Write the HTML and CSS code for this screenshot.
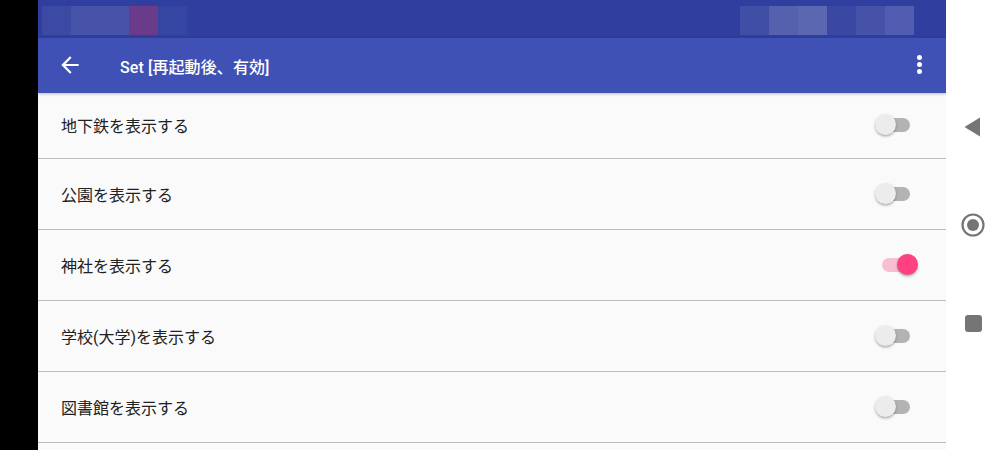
FILE: index.html
```html
<!DOCTYPE html>
<html lang="ja">
<head>
<meta charset="utf-8">
<link rel="stylesheet" href="styles.css">
</head>
<body>
<div class="device">
  <div class="bezel"></div>
  <div class="screen">
    <div class="statusbar">
      <div class="blocks">
        <span class="b b1"></span><span class="b b2"></span><span class="b b2"></span><span class="b b3"></span><span class="b b4"></span>
      </div>
      <div class="blocks">
        <span class="b r1"></span><span class="b r2"></span><span class="b r3"></span><span class="b r4"></span><span class="b r5"></span><span class="b r6"></span>
      </div>
    </div>
    <div class="appbar">
      <svg class="back" width="26" height="26" viewBox="0 0 24 24"><path d="M20 11H7.83l5.59-5.59L12 4l-8 8 8 8 1.41-1.41L7.83 13H20v-2z" fill="#fff"/></svg>
      <div class="title">Set [再起動後、有効]</div>
      <div class="dots"><i></i><i></i><i></i></div>
    </div>
    <div class="list">
      <div class="row first"><span class="label">地下鉄を表示する</span><span class="switch"><span class="track"></span><span class="thumb"></span></span></div>
      <div class="row"><span class="label">公園を表示する</span><span class="switch"><span class="track"></span><span class="thumb"></span></span></div>
      <div class="row"><span class="label">神社を表示する</span><span class="switch on"><span class="track"></span><span class="thumb"></span></span></div>
      <div class="row"><span class="label">学校(大学)を表示する</span><span class="switch"><span class="track"></span><span class="thumb"></span></span></div>
      <div class="row"><span class="label">図書館を表示する</span><span class="switch"><span class="track"></span><span class="thumb"></span></span></div>
    </div>
  </div>
  <div class="nav">
    <svg class="nav-back" width="16" height="20" viewBox="0 0 16 20"><path d="M16 0.5V19.5L0.5 10Z" fill="#757575"/></svg>
    <svg class="nav-home" width="26" height="26" viewBox="0 0 26 26"><circle cx="13" cy="13" r="10.5" fill="none" stroke="#757575" stroke-width="2.2"/><circle cx="13" cy="13" r="6" fill="#757575"/></svg>
    <span class="nav-recent"></span>
  </div>
</div>
</body>
</html>
```

FILE: styles.css
```css
* { box-sizing: border-box; }
html, body { margin: 0; padding: 0; }
body {
  width: 1000px;
  height: 450px;
  overflow: hidden;
  font-family: Roboto, "Noto Sans CJK JP", "Noto Sans", sans-serif;
  background: #000;
}
.device {
  display: flex;
  height: 450px;
}
.bezel {
  width: 38px;
  flex: none;
  background: #000;
}
.screen {
  width: 908px;
  flex: none;
  display: flex;
  flex-direction: column;
  background: #fafafa;
  overflow: hidden;
}
.statusbar {
  height: 38px;
  flex: none;
  background: #303f9f;
  display: flex;
  justify-content: space-between;
  padding: 6px 32px 3px 4px;
}
.blocks { display: flex; }
.b { width: 29px; height: 29px; display: block; }
.b1 { background: #3c4aa3; }
.b2 { background: #4653a8; }
.b3 { background: #6a3b8a; }
.b4 { background: #3545a2; }
.r1 { background: #414ea5; }
.r2 { background: #5561ad; }
.r3 { background: #5b67b1; }
.r4 { background: #3b48a3; }
.r5 { background: #4652a8; }
.r6 { background: #515db0; }

.appbar {
  height: 55px;
  flex: none;
  background: #3f51b5;
  display: flex;
  align-items: center;
  padding: 0 0 0 19px;
  color: #fff;
  position: relative;
  z-index: 1;
  box-shadow: 0 1px 3px rgba(0,0,0,0.25);
}
.back { flex: none; margin-top: -1px; }
.title {
  margin-left: 37px;
  font-size: 16px;
  font-weight: 500;
  flex: 1;
  letter-spacing: 0.1px;
}
.dots {
  width: 5px;
  margin-right: 24px;
  display: flex;
  flex-direction: column;
  gap: 2px;
  margin-top: -2px;
}
.dots i {
  display: block;
  width: 5px;
  height: 5px;
  border-radius: 50%;
  background: #fff;
}

.list { display: flex; flex-direction: column; }
.row {
  height: 71px;
  flex: none;
  border-bottom: 1.5px solid #bdbdbd;
  display: flex;
  align-items: center;
  justify-content: space-between;
  padding: 0 26px 0 23px;
}
.row.first { height: 65.5px; }
.label {
  font-size: 16px;
  color: #212121;
  font-family: Roboto, "Noto Sans CJK JP", sans-serif;
}
.switch {
  position: relative;
  width: 48px;
  height: 24px;
  flex: none;
}
.track {
  position: absolute;
  left: 12px;
  top: 5px;
  width: 26px;
  height: 14px;
  border-radius: 7px;
  background: #b3b3b3;
}
.thumb {
  position: absolute;
  left: 3px;
  top: 1px;
  width: 21px;
  height: 21px;
  border-radius: 50%;
  background: #ececec;
  box-shadow: 0 1.5px 2.5px rgba(0,0,0,0.3);
}
.switch.on .track { background: #f8bfd2; left: 10px; }
.switch.on .thumb { left: 25px; background: #ff4081; }

.nav {
  width: 54px;
  flex: none;
  background: #fff;
  display: flex;
  flex-direction: column;
  align-items: center;
  padding-top: 117px;
}
.nav-back { margin-left: -2px; }
.nav-home { margin-top: 75px; }
.nav-recent {
  display: block;
  width: 17px;
  height: 17px;
  border-radius: 3px;
  background: #757575;
  margin-top: 77px;
}
```
